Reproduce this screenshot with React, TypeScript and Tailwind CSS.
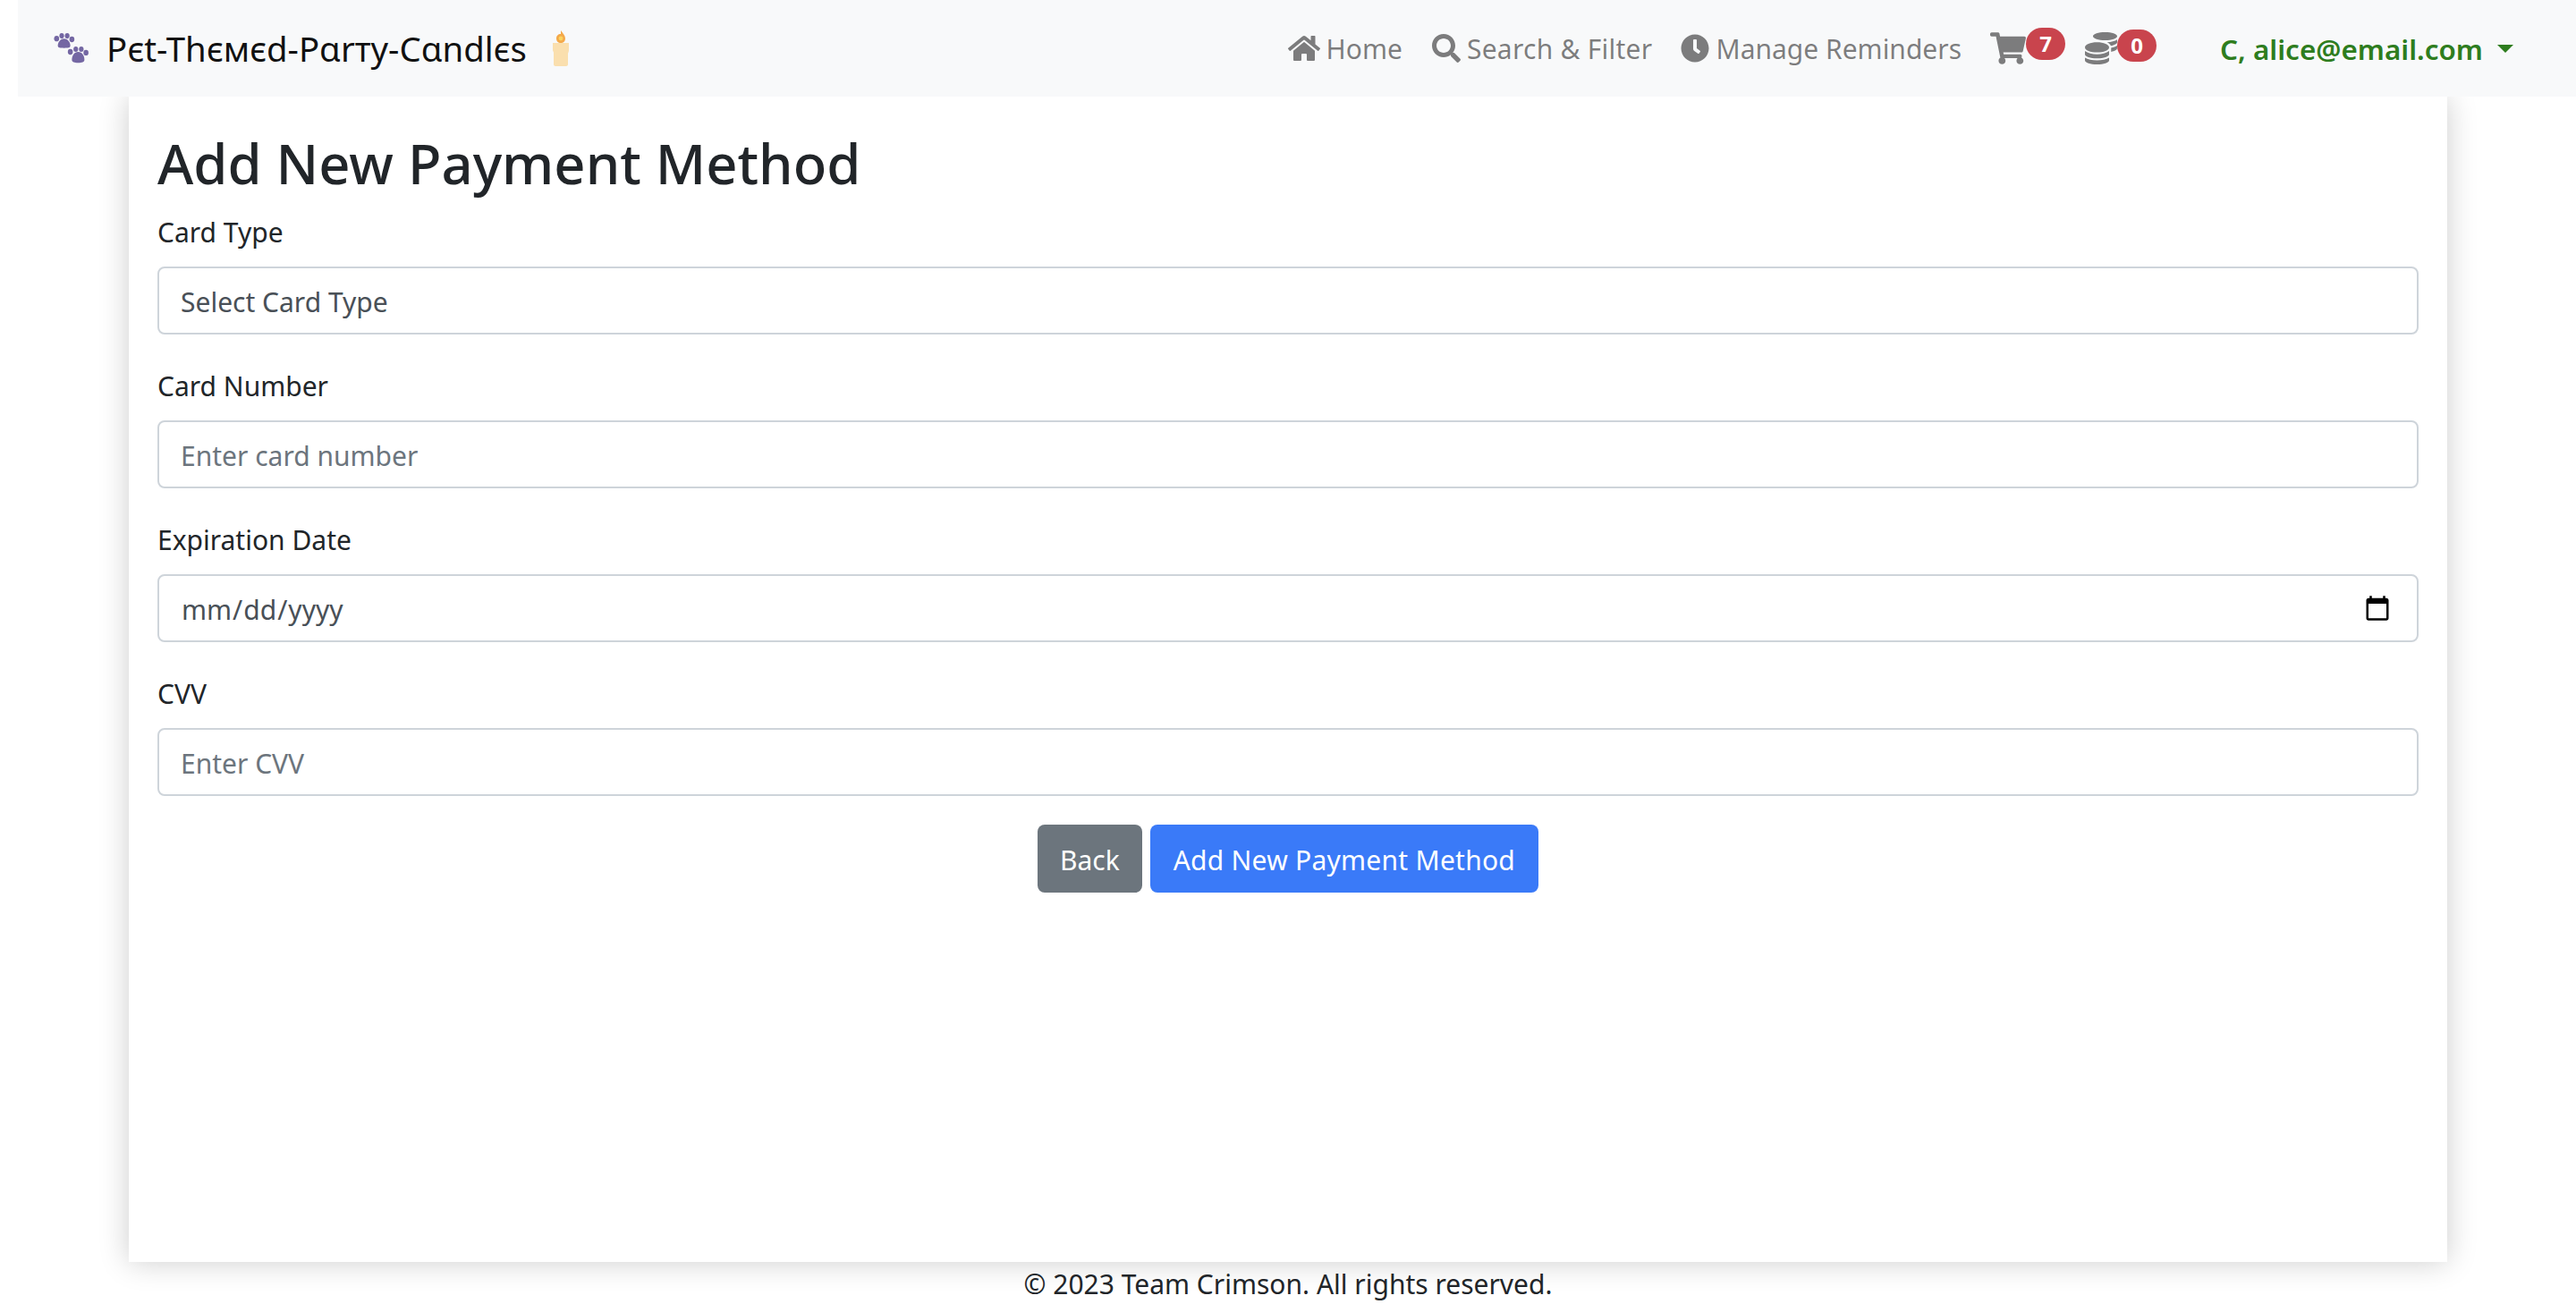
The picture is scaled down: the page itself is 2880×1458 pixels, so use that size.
import { FaClock, FaCoins, FaHome, FaSearch, FaShoppingCart } from "react-icons/fa";

const FONT = "font-['Noto_Sans',sans-serif]";

function PawLogo() {
  return (
    <svg width="39" height="35" viewBox="0 0 44 40" className="fill-[#7467a3]">
      <ellipse cx="3.5" cy="7" rx="3.2" ry="3.6" />
      <ellipse cx="10" cy="3.5" rx="3" ry="3.5" />
      <ellipse cx="17" cy="3.5" rx="3" ry="3.5" />
      <ellipse cx="23" cy="8" rx="3.2" ry="3.6" />
      <path d="M13 7c5 0 8 5 8 9 0 3-3 3-8 3s-8 0-8-3c0-4 3-9 8-9z" />
      <ellipse cx="21" cy="24" rx="3.2" ry="3.6" />
      <ellipse cx="28" cy="20.5" rx="3" ry="3.5" />
      <ellipse cx="35" cy="20.5" rx="3" ry="3.5" />
      <ellipse cx="41" cy="25" rx="3.2" ry="3.6" />
      <path d="M31 24c5 0 8 5 8 10 0 3-3 4-8 4s-8-1-8-4c0-5 3-10 8-10z" />
    </svg>
  );
}

function CandleLogo() {
  return (
    <svg width="20" height="40" viewBox="0 0 20 40" className="block">
      <path d="M10 0c3 4 5 6 5 9 0 3-2 5-5 5s-5-2-5-5c0-3 2-5 5-5z" className="fill-[#f4a94a]" />
      <circle cx="10" cy="9" r="2.4" className="fill-[#fbd35f]" />
      <path d="M1 14h18v8c0 2-1 3-1 4v12c0 1-1 2-2 2H4c-1 0-2-1-2-2V25c0-1-1-2-1-3z" className="fill-[#fadfae]" />
    </svg>
  );
}

function NavLink({ icon, label, className }: { icon: React.ReactNode; label: string; className?: string }) {
  return (
    <a className={`flex items-center gap-[7px] text-[rgba(0,0,0,0.5)] text-[30px] ${className ?? ""}`}>
      {icon}
      <span className="pt-[2px]">{label}</span>
    </a>
  );
}

function CountIcon({ icon, count }: { icon: React.ReactNode; count: number }) {
  return (
    <a className="flex items-start text-[rgba(0,0,0,0.5)]">
      <span className="mt-[1px]">{icon}</span>
      <span className="mt-[-2px] h-[36px] min-w-[44px] rounded-full bg-[#c9444d] text-white text-[24px] font-bold leading-[36px] text-center">
        {count}
      </span>
    </a>
  );
}

function Field({ label, children }: { label: string; children: React.ReactNode }) {
  return (
    <div className="mb-[34px]">
      <label className="block mb-[14px] text-[30px] leading-[48px] text-[#212529]">{label}</label>
      {children}
    </div>
  );
}

const inputClass =
  "block w-full h-[76px] rounded-[8px] border-2 border-[#ced4da] bg-white px-[24px] pt-[2px] text-[30px] text-[#495057] placeholder:text-[#6c757d] outline-none";

export default function App() {
  return (
    <div className={`${FONT} bg-white h-[1458px] overflow-hidden text-[#212529]`}>
      <nav className="relative z-10 ml-[20px] h-[108px] bg-[#f8f9fa] flex items-center justify-between pl-[40px] pr-[70px]">
        <div className="flex items-center">
          <PawLogo />
          <span className="ml-[20px] pt-[2px] text-[38.3px] text-[#111]">Pϵt-Thϵмϵd-Pαrтy-Cαndlϵs</span>
          <span className="ml-[28px]"><CandleLogo /></span>
        </div>
        <div className="flex items-center">
          <NavLink icon={<FaHome size={36} />} label="Home" />
          <NavLink className="ml-[33px] tracking-[0.25px]" icon={<FaSearch size={32} />} label="Search & Filter" />
          <NavLink className="ml-[32px]" icon={<FaClock size={32} />} label="Manage Reminders" />
          <div className="ml-[32px]"><CountIcon icon={<FaShoppingCart size={40} />} count={7} /></div>
          <div className="ml-[22px]"><CountIcon icon={<FaCoins size={36} />} count={0} /></div>
          <a className="ml-[71px] pt-[2px] flex items-center text-[31.4px] font-semibold text-[#2e7d1e]">
            C, alice@email.com
            <span className="ml-[16px] border-x-[9px] border-x-transparent border-t-[9px] border-t-[#2e7d1e]" />
          </a>
        </div>
      </nav>

      <main className="mx-[144px] h-[1303px] bg-white shadow-[0_0_32px_rgba(0,0,0,0.2)] px-[32px] pt-[32px]">
        <h1 className="text-[61.5px] font-medium leading-[84px] mb-[12px]">Add New Payment Method</h1>
        <Field label="Card Type">
          <select className={`${inputClass} appearance-none`}>
            <option>Select Card Type</option>
          </select>
        </Field>
        <Field label="Card Number">
          <input className={inputClass} placeholder="Enter card number" />
        </Field>
        <Field label="Expiration Date">
          <input
            type="date"
            className={`${inputClass} [&::-webkit-calendar-picker-indicator]:w-[32px] [&::-webkit-calendar-picker-indicator]:h-[32px] [&::-webkit-calendar-picker-indicator]:mr-[2px]`}
          />
        </Field>
        <Field label="CVV">
          <input className={inputClass} placeholder="Enter CVV" />
        </Field>
        <div className="-mt-[2px] flex justify-center gap-[9px]">
          <button className="h-[76px] px-[25px] pt-[2px] rounded-[8px] bg-[#6c757d] text-white text-[30px]">Back</button>
          <button className="h-[76px] px-[26px] pt-[2px] rounded-[8px] bg-[#3a7af8] text-white text-[30px] tracking-[0.25px]">
            Add New Payment Method
          </button>
        </div>
      </main>

      <footer className="text-center text-[30px] leading-[48px] mt-[1px]">© 2023 Team Crimson. All rights reserved.</footer>
    </div>
  );
}
